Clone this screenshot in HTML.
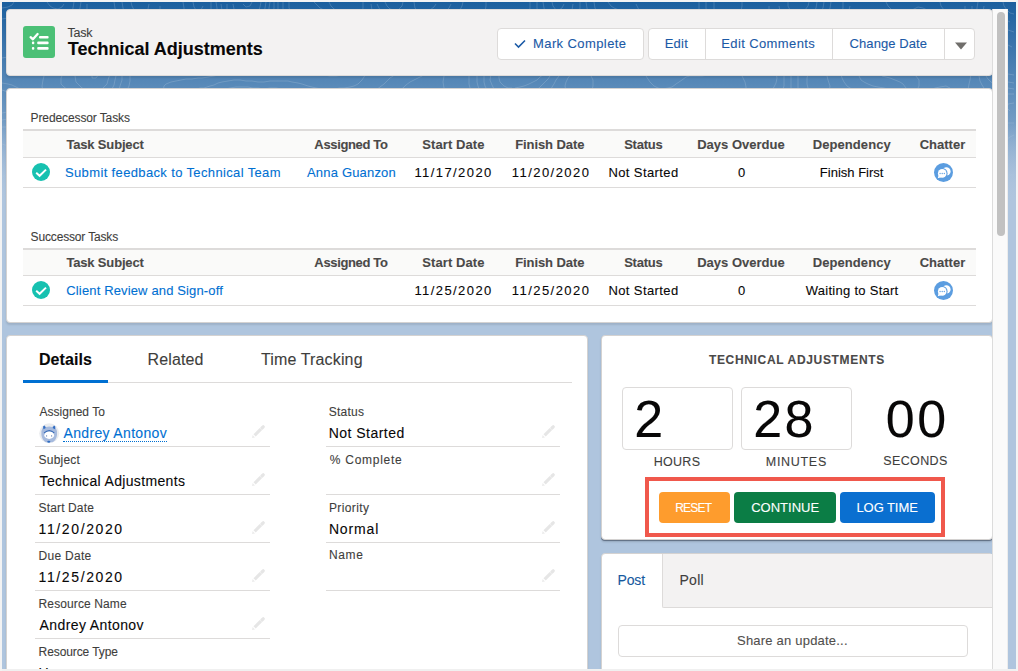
<!DOCTYPE html>
<html><head><meta charset="utf-8">
<style>
*{box-sizing:border-box;margin:0;padding:0}
html,body{width:1018px;height:671px;overflow:hidden;background:#f3f3f3;font-family:"Liberation Sans",sans-serif}
#bg{position:absolute;left:2px;top:2px;width:1014px;height:667px;overflow:hidden;background:linear-gradient(to bottom,rgba(175,197,222,0) 120px,#afc5de 200px),linear-gradient(to bottom,#1b5f9e 0,rgba(27,95,158,0) 200px),#afc5de}
.card{position:absolute;background:#fff;border-radius:4px;border:1px solid #d4d2d1;box-shadow:0 2px 2px rgba(0,0,0,.1);overflow:hidden}
.t{position:absolute;white-space:nowrap;line-height:1;-webkit-text-stroke:0.1px currentColor}
.line{position:absolute;height:1px;background:#dddbda}
</style></head><body>
<div id="bg"><div style="position:absolute;left:0;top:0;width:1014px;height:230px;-webkit-mask-image:linear-gradient(to bottom,#000 0,#000 90px,transparent 200px)"><svg style="position:absolute;left:0;top:0" width="1014" height="230" viewBox="0 0 1014 230"><path d="M1012 215 L1006 216 L1002 218 L999 220 L996 224 L995 228 M928 134 L932 132 L935 128 L934 122 L931 120 L928 120 L924 122 L921 126 L921 132 L924 134 L928 134 M1012 210 L1006 211 L1002 212 L998 214 L994 217 L992 220 L990 224 M925 150 L928 148 L932 145 L935 142 L938 139 L940 136 L942 132 L944 126 L944 123 L943 118 L940 115 L936 112 L932 112 L928 112 L923 114 L920 116 L916 119 L913 122 L911 126 L910 130 L910 135 L912 139 L914 143 L916 146 L920 150 L924 150 M1012 207 L1006 207 L1000 208 L996 209 L992 212 L989 214 L986 218 L985 222 L984 228 M327 0 L329 4 L332 7 L336 9 L340 11 L344 12 L350 13 L356 14 L360 11 L361 6 L361 0 M550 0 L551 4 L554 8 L557 8 L560 6 L562 2 M922 164 L926 162 L928 160 L932 156 L934 154 L937 150 L940 146 L942 144 L945 140 L947 136 L949 132 L950 126 L949 120 L948 116 L946 112 L942 109 L938 107 L934 106 L930 106 L924 108 L920 110 L917 112 L914 114 L910 118 L908 120 L905 124 L903 128 L901 132 L902 138 L904 142 L906 146 L908 150 L910 154 L912 158 L914 161 L918 164 L922 164 M1012 203 L1006 203 L1000 204 L996 205 L992 206 L988 208 L984 211 L982 214 L980 220 L979 224 M312 0 L316 4 L318 6 L322 8 L326 11 L330 13 L334 14 L338 16 L343 18 L348 20 L352 22 L356 24 L359 26 L362 28 L366 30 L370 32 L376 33 L380 32 L382 26 L379 22 L376 18 L374 15 L372 12 L370 8 L369 2 M541 0 L542 6 L543 10 L545 14 L548 17 L552 19 L558 20 L563 18 L566 16 L569 12 L570 8 L571 2 M525 72 L530 70 L533 68 L536 65 L538 62 L539 56 L536 52 L532 51 L527 52 L523 54 L520 56 L517 60 L515 64 L515 70 L518 72 L524 72 M94 76 L97 72 L94 69 L90 70 L90 76 L94 76 M920 172 L924 171 L928 168 L930 166 L934 162 L936 160 L939 156 L942 152 L944 150 L947 146 L950 142 L952 138 L954 134 L955 130 L955 124 L954 118 L953 114 L951 110 L948 107 L945 104 L942 102 L936 101 L930 101 L926 102 L922 104 L918 106 L914 109 L911 112 L908 114 L904 118 L902 121 L899 124 L896 128 L894 131 L893 136 L894 140 L896 144 L899 148 L902 152 L904 156 L906 160 L907 164 L910 168 L912 170 L917 172 M604 170 L606 168 L609 164 L612 160 L614 157 L617 154 L620 151 L622 148 L624 144 L625 138 L623 134 L620 131 L616 128 L612 127 L608 128 L604 132 L602 135 L599 138 L596 142 L594 144 L591 148 L588 152 L586 156 L587 162 L589 166 L592 169 L596 171 L602 171 M467 146 L469 142 L466 138 L463 136 L458 135 L454 137 L452 140 L454 144 L456 146 L462 147 L467 146 M1012 199 L1006 199 L1000 200 L996 200 L990 202 L986 203 L982 206 L979 208 L976 212 L975 216 L974 222 L974 226 M856 228 L854 224 L850 222 L846 221 L842 222 L839 226 M0 6 L6 5 L10 3 L12 0 M45 0 L48 4 L51 6 L56 7 L60 5 L62 2 M287 0 L287 6 L289 10 L292 13 L298 14 L304 13 L310 12 L316 13 L320 14 L325 16 L330 18 L334 20 L338 21 L342 23 L346 25 L350 27 L354 30 L357 32 L360 34 L364 37 L368 40 L372 42 L376 43 L381 44 L385 44 L390 43 L394 42 L398 39 L400 36 L402 30 L400 25 L396 22 L392 20 L389 18 L386 16 L382 13 L379 10 L377 6 L375 2 M412 0 L413 6 L416 10 L420 11 L424 10 L428 8 L432 5 L434 2 M535 0 L535 6 L536 12 L537 16 L538 21 L540 26 L542 30 L544 32 L548 32 L554 31 L558 29 L562 28 L567 26 L570 24 L574 21 L576 17 L577 12 L578 6 L578 0 M938 0 L939 4 L942 8 L944 11 L946 14 L948 18 L950 24 L951 28 L951 34 L951 40 L952 46 L954 49 L958 48 L960 44 L962 39 L963 34 L963 28 L963 22 L963 16 L963 10 L963 4 M513 86 L518 85 L522 84 L527 82 L531 80 L535 78 L538 75 L542 72 L544 69 L546 66 L548 62 L549 56 L549 50 L548 46 L546 41 L544 37 L540 36 L536 37 L531 38 L526 40 L522 42 L518 44 L515 46 L512 48 L508 52 L506 55 L504 58 L501 62 L499 66 L497 70 L497 76 L498 80 L502 84 L506 86 L510 86 M99 88 L102 85 L105 82 L106 78 L108 72 L107 66 L104 62 L102 59 L98 57 L92 56 L87 58 L83 60 L80 63 L77 66 L75 70 L73 74 L74 80 L76 82 L80 86 L84 88 L88 89 L94 90 L99 88 M266 110 L270 109 L273 106 L275 102 L272 99 L268 98 L262 97 L256 97 L252 96 L246 95 L240 95 L236 96 L235 102 L238 105 L242 107 L246 108 L252 109 L258 110 L262 110 M920 178 L925 176 L928 174 L932 171 L935 168 L938 164 L940 162 L944 158 L946 155 L949 152 L952 148 L954 145 L956 142 L958 138 L960 133 L961 128 L960 122 L959 118 L958 114 L956 109 L954 106 L951 102 L948 99 L944 96 L940 95 L934 95 L928 96 L924 98 L920 100 L917 102 L914 104 L910 108 L907 110 L904 113 L901 116 L898 119 L895 122 L892 125 L889 128 L886 131 L884 134 L883 140 L886 144 L888 146 L892 150 L894 152 L897 156 L900 160 L902 164 L904 168 L906 171 L908 174 L912 177 L916 178 L920 178 M617 188 L620 186 L623 182 L625 178 L626 172 L627 168 L629 164 L631 160 L633 156 L635 152 L636 148 L638 142 L638 138 L637 134 L635 130 L632 126 L630 124 L626 120 L623 118 L620 115 L616 113 L612 112 L606 112 L602 114 L599 116 L596 120 L594 123 L592 127 L590 131 L588 134 L585 138 L582 142 L580 144 L576 148 L574 150 L572 156 L574 162 L576 165 L578 168 L581 172 L584 176 L586 179 L589 182 L592 185 L596 187 L600 188 L606 189 L612 189 L617 188 M473 156 L477 154 L480 151 L481 146 L480 140 L478 137 L475 134 L472 132 L468 129 L464 128 L458 127 L452 127 L446 128 L443 130 L440 134 L439 138 L440 144 L441 148 L444 152 L446 154 L450 156 L456 158 L462 158 L468 157 L473 156 M537 172 L541 170 L544 167 L546 164 L550 160 L552 157 L554 154 L555 148 L554 144 L552 140 L550 136 L547 132 L544 129 L538 130 L536 132 L533 136 L532 140 L530 146 L530 150 L529 156 L529 162 L530 166 L532 170 L536 172 M818 200 L819 196 L818 190 L816 188 L812 188 L809 192 L810 198 L812 200 L818 200 M1012 195 L1006 195 L1000 196 L996 196 L990 197 L986 198 L981 200 L978 202 L974 205 L971 208 L969 212 L968 216 L968 222 L968 228 M763 228 L763 222 L763 216 L762 212 L760 207 L758 204 L754 200 L752 202 L754 208 L755 212 L757 216 L758 222 L759 226 M870 228 L868 224 L864 221 L860 218 L856 216 L852 214 L848 213 L842 212 L836 212 L832 214 L830 218 L829 224 M0 17 L6 16 L10 15 L14 13 L18 12 L24 11 L30 10 L36 12 L40 14 L44 16 L48 18 L52 20 L56 21 L61 20 L64 18 L67 14 L70 10 L71 6 L72 0 M129 0 L130 4 L132 8 L136 12 L140 13 L144 11 L146 7 L147 2 M191 0 L192 5 L194 8 L199 8 L201 4 M281 0 L281 6 L281 12 L282 16 L284 21 L287 24 L292 25 L297 24 L302 22 L306 21 L310 20 L316 19 L320 20 L326 22 L330 23 L334 25 L338 26 L342 28 L346 30 L350 33 L354 36 L356 38 L360 41 L363 44 L366 46 L370 49 L374 52 L378 54 L382 55 L388 56 L394 55 L399 54 L404 52 L408 50 L410 48 L413 44 L415 40 L417 36 L419 32 L421 28 L424 24 L426 22 L430 19 L434 16 L437 14 L440 12 L444 9 L447 6 L449 2 M401 0 L400 4 L396 8 L392 8 L388 7 L385 4 L383 0 M528 0 L528 6 L527 12 L526 18 L524 22 L522 25 L518 27 L514 28 L510 28 L504 27 L503 32 L502 36 L500 42 L499 46 L497 50 L496 54 L494 58 L492 62 L490 67 L489 72 L488 78 L490 83 L492 87 L495 90 L498 92 L502 94 L508 96 L512 96 L516 96 L522 94 L526 93 L530 91 L534 88 L537 86 L540 83 L543 80 L546 77 L548 74 L551 70 L554 66 L555 62 L557 58 L558 53 L559 48 L560 44 L562 40 L566 37 L570 35 L574 33 L578 31 L582 29 L585 26 L586 22 L586 16 L586 12 L585 6 L584 0 M841 0 L841 6 L840 10 L838 14 L836 19 L836 24 L840 24 L842 22 L844 17 L845 12 L847 8 L848 4 M884 0 L886 4 L890 8 L894 10 L898 11 L904 11 L908 9 L912 7 L916 5 L921 6 L925 8 L928 10 L932 12 L936 16 L938 18 L940 22 L942 28 L942 32 L942 38 L942 42 L941 48 L941 54 L942 60 L943 64 L945 68 L948 71 L952 72 L956 71 L959 68 L962 64 L964 60 L965 56 L966 51 L967 46 L968 42 L969 36 L970 30 L970 24 L970 20 L970 14 L970 8 L970 4 M621 46 L625 44 L625 38 L622 35 L618 33 L613 34 L610 38 L610 40 L613 44 L617 46 L621 46 M103 104 L104 100 L106 96 L108 92 L110 87 L112 83 L113 78 L114 74 L114 69 L113 64 L111 60 L108 56 L106 54 L102 51 L98 49 L92 49 L86 50 L82 51 L78 54 L75 56 L72 59 L69 62 L66 65 L64 68 L61 72 L59 76 L59 82 L62 85 L66 88 L70 90 L74 91 L78 93 L82 95 L86 98 L90 100 L93 102 L96 104 L102 105 M271 128 L275 126 L278 123 L281 120 L284 117 L287 114 L290 111 L293 108 L296 104 L297 100 L296 94 L294 92 L290 90 L286 88 L280 87 L274 86 L268 86 L262 87 L256 86 L251 86 L246 85 L240 85 L234 85 L228 86 L224 87 L220 90 L218 93 L218 98 L219 102 L222 105 L224 108 L228 112 L230 114 L234 117 L238 120 L242 121 L246 123 L250 124 L255 126 L260 128 L264 129 L270 128 M920 184 L925 182 L928 180 L932 177 L935 174 L938 171 L940 168 L944 164 L946 162 L950 158 L952 155 L955 152 L958 149 L960 146 L963 142 L965 138 L966 134 L967 128 L966 124 L965 118 L963 114 L962 110 L960 105 L958 100 L956 97 L954 93 L952 90 L948 86 L944 84 L938 85 L933 86 L929 88 L926 90 L922 92 L918 95 L915 98 L912 101 L908 104 L906 106 L902 110 L900 112 L896 116 L893 118 L890 121 L886 124 L883 126 L880 129 L876 132 L874 135 L872 140 L872 142 L875 146 L878 148 L882 150 L886 153 L890 156 L892 158 L895 162 L897 166 L900 170 L902 174 L904 177 L907 180 L910 182 L916 184 L920 184 M0 111 L5 110 L9 108 L12 105 L14 100 L12 94 L10 92 L6 90 L0 88 M621 196 L626 194 L629 192 L632 188 L634 184 L634 180 L635 174 L636 170 L638 164 L639 160 L641 156 L642 152 L644 148 L646 142 L647 138 L648 132 L646 128 L642 124 L640 122 L636 119 L633 116 L630 113 L626 110 L624 108 L620 105 L616 103 L612 102 L606 102 L602 103 L598 105 L594 108 L592 110 L588 114 L586 117 L584 120 L582 124 L579 128 L576 132 L573 134 L568 135 L564 132 L562 129 L560 126 L558 122 L555 118 L552 116 L548 114 L542 113 L537 114 L533 116 L530 119 L528 123 L526 128 L525 132 L523 136 L522 141 L521 146 L519 150 L518 156 L517 160 L518 166 L519 170 L520 174 L522 180 L524 184 L526 188 L528 192 L531 194 L536 194 L540 192 L542 190 L545 186 L547 182 L550 178 L552 175 L555 172 L558 170 L564 169 L568 171 L571 174 L574 177 L576 180 L579 184 L581 188 L584 191 L588 194 L592 195 L598 196 L602 196 L608 197 L614 197 L620 196 M340 138 L345 136 L348 133 L351 130 L352 126 L354 120 L353 114 L351 110 L348 106 L344 104 L340 104 L336 104 L332 106 L329 110 L327 114 L327 120 L328 126 L329 130 L330 134 L334 138 L338 138 M469 164 L474 163 L479 162 L484 160 L487 158 L490 154 L491 150 L490 145 L488 140 L486 136 L484 134 L480 130 L477 128 L473 126 L469 124 L464 123 L460 122 L454 121 L448 121 L442 122 L438 124 L436 126 L433 130 L432 134 L431 140 L431 146 L432 150 L434 154 L437 158 L440 161 L444 164 L448 165 L454 166 L460 165 L466 164 M165 178 L168 176 L170 172 L170 167 L168 164 L164 161 L158 160 L153 162 L150 164 L148 168 L148 173 L151 176 L154 178 L160 179 L165 178 M885 228 L883 224 L880 221 L876 219 L872 217 L868 215 L864 213 L860 211 L856 210 L851 208 L846 206 L842 204 L838 202 L836 200 L833 196 L832 190 L832 184 L832 178 L831 174 L829 170 L825 168 L820 167 L814 167 L810 168 L806 171 L803 174 L801 178 L799 182 L797 186 L795 190 L794 196 L796 202 L798 205 L802 208 L805 210 L809 212 L812 214 L816 217 L819 220 L820 224 M775 228 L776 222 L776 216 L775 210 L774 206 L772 202 L769 198 L766 194 L764 191 L761 188 L758 184 L756 182 L752 179 L746 178 L742 180 L738 184 L736 188 L737 194 L738 198 L740 202 L742 206 L744 210 L746 215 L747 220 L748 224 M1012 191 L1006 191 L1000 191 L994 192 L990 193 L984 194 L980 195 L976 197 L972 199 L968 202 L966 204 L962 208 L960 212 L959 216 L958 220 L958 225 M522 228 L521 222 L518 218 L514 217 L508 217 L504 219 L500 222 L498 224 L496 228 M411 228 L408 225 L404 224 L402 226 M0 56 L6 55 L10 54 L14 52 L17 48 L18 44 L18 40 L17 34 L16 30 L17 26 L20 22 L24 21 L30 21 L35 22 L39 24 L42 26 L46 29 L49 32 L53 34 L58 36 L62 36 L66 34 L68 32 L71 28 L72 24 L74 20 L76 14 L77 10 L78 6 L79 0 M120 0 L121 6 L122 10 L124 14 L127 18 L130 21 L134 23 L138 25 L144 26 L146 26 L152 25 L155 22 L157 18 L158 14 L158 8 L158 4 M181 0 L182 6 L182 10 L184 14 L187 18 L190 21 L194 23 L198 24 L202 24 L206 20 L208 16 L209 12 L209 6 L209 0 M276 0 L276 6 L276 12 L276 18 L276 24 L277 28 L279 32 L282 35 L286 37 L292 37 L296 35 L300 33 L304 30 L308 28 L312 26 L316 26 L320 26 L326 27 L330 28 L334 30 L339 32 L343 34 L346 36 L350 39 L353 42 L356 45 L359 48 L361 52 L364 56 L365 60 L365 66 L364 71 L362 75 L360 78 L356 82 L352 84 L348 85 L342 86 L338 86 L332 87 L326 87 L320 87 L314 86 L310 85 L306 84 L300 82 L296 81 L290 80 L286 79 L280 79 L274 79 L268 79 L262 80 L256 80 L250 79 L244 79 L238 78 L232 78 L226 79 L220 80 L216 81 L212 83 L208 84 L202 86 L198 86 L192 88 L188 89 L184 91 L182 94 L182 99 L184 102 L188 105 L192 106 L198 107 L204 107 L208 108 L212 110 L216 113 L219 116 L222 120 L224 122 L227 126 L230 129 L234 131 L238 133 L242 135 L246 136 L251 138 L255 140 L259 142 L262 144 L268 146 L274 145 L278 142 L280 140 L283 136 L286 132 L288 129 L291 126 L294 123 L298 120 L302 118 L306 118 L310 119 L313 122 L316 126 L317 130 L318 134 L320 140 L321 144 L324 147 L328 149 L334 149 L338 148 L342 146 L346 144 L350 141 L353 138 L356 135 L359 132 L361 128 L363 124 L364 118 L364 114 L365 108 L366 102 L367 98 L369 94 L372 90 L374 88 L378 85 L382 82 L384 80 L388 76 L391 74 L394 72 L398 69 L402 67 L406 65 L410 63 L414 61 L418 58 L420 56 L423 52 L426 48 L427 44 L429 40 L430 36 L432 32 L435 28 L438 25 L442 22 L445 20 L448 18 L452 14 L455 12 L458 8 L460 4 L461 0 M484 0 L484 4 L483 10 L482 16 L482 22 L484 28 L485 32 L486 36 L488 42 L488 46 L488 50 L486 56 L485 60 L484 64 L482 70 L482 74 L482 80 L483 84 L485 88 L487 92 L490 95 L493 98 L496 100 L500 103 L504 105 L508 107 L512 108 L516 112 L517 116 L518 122 L517 128 L516 132 L514 137 L512 141 L510 144 L506 146 L502 145 L499 142 L496 138 L494 135 L491 132 L488 129 L485 126 L482 124 L477 122 L472 120 L468 119 L464 118 L458 116 L454 115 L448 115 L442 115 L438 116 L434 118 L430 122 L428 125 L426 129 L424 133 L423 138 L422 142 L422 148 L423 152 L425 156 L427 160 L430 163 L432 166 L436 169 L440 172 L444 173 L450 174 L456 173 L460 172 L466 171 L470 170 L476 169 L482 168 L486 168 L492 167 L498 167 L503 168 L506 170 L509 174 L511 178 L513 182 L514 186 L516 192 L516 198 L514 203 L511 206 L508 208 L504 211 L500 214 L497 216 L494 219 L491 222 L488 226 M712 0 L712 6 L712 10 L713 16 L713 22 L712 28 L710 31 L708 34 L704 38 L702 40 L698 44 L696 46 L692 50 L690 53 L687 56 L684 58 L678 60 L672 59 L666 58 L662 58 L656 56 L652 55 L648 52 L645 50 L643 46 L641 42 L638 38 L636 34 L634 31 L631 28 L628 25 L624 22 L620 21 L616 20 L610 19 L606 18 L600 16 L598 14 L595 10 L593 6 L592 0 M534 228 L534 222 L535 218 L537 214 L540 210 L543 208 L546 205 L549 202 L551 198 L554 194 L556 190 L558 187 L562 185 L566 186 L569 190 L572 194 L574 197 L577 200 L582 202 L586 202 L591 202 L596 202 L602 202 L608 202 L612 202 L618 202 L624 202 L628 201 L632 199 L636 196 L638 193 L640 189 L641 184 L642 180 L643 174 L643 168 L644 164 L646 158 L648 154 L650 150 L652 146 L654 143 L656 140 L660 136 L664 134 L667 132 L670 130 L673 126 L672 122 L668 119 L662 118 L658 118 L652 117 L648 116 L644 114 L640 112 L636 109 L633 106 L630 103 L626 100 L624 98 L620 94 L617 92 L614 90 L608 89 L604 90 L600 93 L597 96 L594 98 L590 101 L586 103 L582 106 L578 107 L574 108 L570 108 L565 106 L560 104 L556 102 L553 100 L550 98 L547 94 L548 90 L550 85 L552 82 L554 78 L557 74 L559 70 L562 66 L564 62 L566 58 L568 54 L570 51 L573 48 L577 46 L582 45 L586 46 L590 49 L593 52 L596 56 L598 59 L600 62 L604 66 L608 68 L610 68 L616 66 L620 64 L624 63 L630 63 L636 64 L638 66 L642 70 L644 74 L646 77 L648 80 L652 84 L656 86 L660 87 L666 86 L670 85 L674 82 L677 80 L680 78 L684 75 L688 74 L694 74 L700 74 L706 73 L710 72 L715 70 L718 68 L722 65 L726 62 L728 59 L728 56 L726 50 L725 46 L723 42 L723 36 L724 30 L726 27 L729 24 L732 21 L734 18 L737 14 L739 10 L740 4 L740 0 M829 0 L828 6 L827 10 L825 14 L823 18 L822 22 L820 28 L822 34 L824 36 L828 38 L834 40 L838 40 L842 39 L846 37 L850 34 L852 31 L854 27 L856 23 L858 19 L860 16 L864 12 L868 10 L874 11 L878 13 L882 15 L886 18 L889 20 L892 22 L896 26 L898 29 L900 34 L901 38 L900 44 L900 48 L899 54 L899 60 L901 64 L904 68 L907 70 L911 72 L914 74 L917 78 L917 84 L915 88 L913 92 L910 96 L908 98 L905 102 L902 105 L899 108 L896 111 L892 114 L890 116 L886 119 L882 121 L878 124 L875 126 L872 128 L868 131 L864 134 L861 136 L858 139 L855 142 L853 146 L852 150 L856 152 L860 152 L866 153 L871 154 L876 155 L880 157 L884 159 L888 162 L890 164 L893 168 L895 172 L898 176 L900 179 L902 182 L906 186 L908 188 L912 190 L918 191 L924 190 L928 188 L930 186 L934 182 L936 180 L939 176 L942 173 L945 170 L948 166 L950 164 L954 161 L957 158 L960 155 L964 152 L966 150 L970 146 L972 144 L974 140 L975 134 L975 128 L973 124 L972 120 L970 114 L969 110 L968 106 L967 100 L966 94 L966 88 L967 82 L968 78 L969 72 L969 66 L970 60 L970 56 L971 50 L972 45 L973 40 L974 34 L974 30 L975 24 L975 18 L975 12 L975 6 L976 0 M930 41 L924 41 L922 38 L919 34 L919 28 L922 24 L926 24 L930 26 L932 29 L933 34 L932 38 M100 134 L106 132 L109 130 L112 127 L114 123 L116 118 L116 114 L116 109 L115 104 L115 98 L116 92 L117 88 L118 84 L120 78 L120 74 L120 68 L119 64 L117 60 L115 56 L112 52 L110 49 L106 46 L103 44 L99 42 L94 41 L88 41 L82 41 L77 42 L72 44 L68 46 L66 48 L62 52 L60 54 L56 58 L54 60 L50 63 L47 66 L44 70 L42 74 L41 78 L40 84 L41 90 L44 94 L48 95 L54 95 L60 95 L64 96 L70 97 L74 99 L78 101 L81 104 L84 107 L86 110 L88 115 L89 120 L91 124 L92 128 L95 132 L100 134 M761 130 L763 126 L763 120 L763 114 L762 109 L762 104 L762 100 L764 95 L767 92 L770 88 L772 85 L774 81 L775 76 L774 71 L772 67 L769 64 L766 61 L762 59 L758 57 L752 56 L746 56 L740 58 L736 60 L735 64 L737 68 L739 72 L741 76 L743 80 L744 85 L744 89 L742 94 L740 96 L737 100 L734 104 L733 108 L733 114 L735 118 L737 122 L740 125 L744 128 L748 130 L752 131 L758 131 M0 118 L6 117 L10 116 L15 114 L18 112 L22 109 L25 106 L27 102 L27 96 L24 92 L22 90 L18 87 L14 85 L10 83 L6 82 L0 81 M1012 101 L1006 102 L1005 106 L1008 109 M900 228 L899 224 L896 221 L892 218 L889 216 L884 214 L880 213 L876 211 L872 210 L867 208 L862 206 L858 205 L854 203 L850 201 L846 198 L844 196 L842 192 L842 186 L842 182 L844 176 L845 172 L846 166 L846 162 L846 156 L842 154 L838 154 L832 153 L828 152 L824 150 L820 147 L818 144 L815 140 L812 136 L810 134 L806 131 L802 130 L796 129 L790 130 L786 130 L780 132 L776 134 L773 136 L771 140 L771 146 L772 151 L774 155 L776 158 L779 162 L782 165 L784 168 L786 173 L786 178 L785 182 L782 186 L778 187 L774 186 L770 182 L768 179 L766 176 L763 172 L760 170 L756 168 L750 167 L746 168 L740 170 L737 172 L734 174 L730 178 L728 182 L727 186 L728 192 L730 196 L732 200 L734 203 L736 207 L738 211 L740 215 L742 220 L742 224 M167 184 L171 182 L174 179 L176 176 L177 170 L177 164 L174 160 L172 157 L168 155 L164 153 L158 153 L153 154 L148 156 L144 158 L141 160 L138 163 L135 166 L132 170 L132 174 L134 176 L138 179 L142 182 L146 183 L150 184 L156 185 L162 185 L167 184 M116 178 L118 176 L120 172 L118 168 L116 166 L112 163 L108 161 L103 162 L101 166 L102 171 L104 176 L106 178 L112 179 M266 190 L270 187 L272 184 L274 178 L272 172 L270 169 L266 167 L261 168 L257 170 L254 173 L251 176 L250 180 L250 184 L252 188 L256 191 L262 191 L266 190 M1012 186 L1006 186 L1000 187 L994 187 L988 188 L984 188 L978 190 L974 192 L970 194 L966 196 L963 198 L960 200 L956 203 L952 205 L948 208 L944 210 L940 212 L938 214 L935 218 L934 222 L933 228 M450 228 L448 223 L445 220 L442 218 L438 216 L432 215 L426 215 L420 214 L416 213 L412 211 L408 208 L405 206 L401 204 L396 203 L392 204 L389 208 L388 212 L388 218 L388 222 L389 228 M784 228 L785 222 L787 218 L790 216 L796 216 L800 217 L804 219 L808 222 L810 224 M16 228 L12 225 L6 225 L0 225 M106 228 L106 224 L104 218 L103 214 L101 210 L101 204 L104 201 L108 199 L112 196 L116 195 L120 193 L124 192 L130 191 L136 191 L142 191 L148 192 L154 192 L160 192 L166 190 L170 189 L174 186 L176 184 L180 180 L181 176 L183 172 L183 166 L182 160 L180 156 L178 153 L174 150 L170 148 L166 147 L160 147 L154 147 L150 148 L144 150 L140 152 L136 153 L130 153 L125 152 L122 150 L119 146 L118 142 L118 138 L120 132 L122 128 L123 124 L124 118 L124 114 L124 108 L124 104 L124 98 L124 94 L125 88 L127 84 L128 79 L128 74 L128 70 L126 64 L124 60 L122 56 L120 52 L118 49 L116 45 L114 42 L110 38 L107 36 L103 34 L98 33 L94 32 L89 30 L86 27 L84 23 L84 18 L84 14 L85 8 L85 2 M112 0 L113 6 L114 12 L115 16 L117 20 L119 24 L122 27 L126 29 L130 31 L134 32 L139 34 L144 35 L148 36 L154 37 L158 36 L162 34 L166 32 L170 29 L174 27 L180 28 L184 30 L188 31 L192 32 L198 34 L202 34 L206 33 L210 32 L213 28 L215 24 L215 18 L215 12 L215 6 L214 0 M272 0 L272 6 L271 12 L270 18 L270 22 L269 28 L269 34 L271 38 L274 42 L276 44 L280 46 L284 48 L290 49 L295 48 L300 46 L302 44 L306 41 L309 38 L312 36 L316 34 L322 33 L327 34 L332 35 L336 37 L340 39 L344 42 L346 44 L350 48 L352 51 L354 56 L353 62 L351 66 L348 69 L344 72 L340 73 L334 74 L328 74 L322 73 L316 73 L310 72 L304 72 L300 72 L294 71 L288 71 L282 71 L276 71 L272 72 L266 73 L260 73 L254 73 L248 73 L243 72 L238 71 L232 71 L226 71 L222 72 L216 73 L212 74 L206 75 L200 76 L196 76 L190 77 L184 77 L179 78 L174 79 L169 80 L164 82 L162 84 L161 90 L162 94 L165 98 L168 102 L170 105 L173 108 L176 111 L179 114 L182 116 L186 119 L190 121 L194 123 L198 124 L202 126 L206 130 L208 133 L210 136 L214 139 L218 142 L222 144 L226 145 L230 146 L236 148 L240 150 L244 152 L246 156 L245 162 L243 166 L241 170 L240 176 L240 182 L241 188 L243 192 L246 196 L248 198 L252 200 L258 201 L264 201 L270 201 L274 200 L280 198 L284 197 L288 195 L292 192 L293 188 L294 182 L294 178 L296 174 L300 171 L304 170 L310 168 L314 166 L318 164 L322 162 L326 160 L330 158 L334 156 L338 154 L342 152 L346 150 L349 148 L352 146 L356 143 L360 140 L362 138 L366 135 L369 132 L371 128 L373 124 L374 120 L376 114 L378 110 L380 106 L382 103 L385 100 L388 97 L392 94 L394 92 L398 88 L401 86 L404 83 L408 80 L412 78 L416 76 L420 74 L423 72 L426 69 L428 66 L431 62 L434 58 L436 55 L438 52 L441 48 L443 44 L445 40 L448 36 L450 33 L453 30 L456 28 L460 26 L466 26 L469 28 L471 32 L474 36 L476 40 L477 44 L478 48 L478 54 L478 58 L477 64 L476 68 L475 74 L475 80 L476 84 L478 89 L480 93 L482 96 L485 100 L488 104 L490 107 L492 110 L494 114 L492 118 L486 117 L482 116 L476 115 L472 114 L466 113 L462 112 L456 110 L452 109 L447 108 L442 107 L436 108 L432 110 L430 112 L426 116 L424 119 L422 122 L419 126 L417 130 L414 134 L412 137 L410 140 L408 144 L407 150 L408 155 L410 158 L413 162 L416 164 L420 167 L424 170 L426 172 L430 175 L434 178 L438 180 L442 181 L448 181 L454 180 L458 179 L462 177 L467 176 L472 175 L478 175 L484 175 L490 175 L494 176 L498 178 L502 181 L504 184 L506 189 L507 194 L506 198 L504 202 L501 206 L498 208 L494 212 L491 214 L488 217 L485 220 L482 223 L480 228 M704 0 L704 6 L705 12 L704 18 L704 22 L702 26 L700 30 L698 34 L694 38 L692 41 L689 44 L686 47 L682 50 L678 51 L674 52 L669 52 L664 51 L660 50 L656 48 L652 44 L650 42 L647 38 L644 34 L642 31 L640 28 L637 24 L634 20 L632 18 L628 15 L625 12 L621 10 L617 8 L612 6 L609 4 L606 0 M822 0 L821 6 L819 10 L817 14 L815 18 L813 22 L811 26 L811 32 L813 36 L816 40 L818 42 L822 44 L827 46 L832 47 L838 48 L844 47 L848 46 L852 44 L856 41 L858 38 L861 34 L863 30 L866 26 L869 24 L874 23 L878 24 L882 26 L886 30 L888 32 L890 37 L891 42 L890 48 L889 52 L887 56 L884 60 L882 63 L879 66 L877 70 L880 74 L884 75 L888 76 L893 78 L898 80 L901 82 L904 86 L904 90 L903 94 L901 98 L898 102 L896 105 L893 108 L890 111 L886 114 L883 116 L880 118 L876 120 L872 122 L868 124 L864 126 L860 128 L856 130 L851 132 L846 134 L842 135 L836 136 L830 134 L826 132 L824 130 L820 127 L817 124 L814 122 L810 120 L804 118 L800 118 L794 117 L788 116 L784 115 L780 112 L778 109 L777 104 L778 98 L779 94 L780 90 L782 84 L782 80 L782 74 L782 70 L780 66 L777 62 L774 58 L771 56 L768 53 L764 51 L760 49 L756 47 L752 45 L748 44 L744 42 L741 38 L742 33 L744 30 L748 27 L752 25 L756 24 L760 22 L764 19 L766 16 L767 10 L767 4 M1012 92 L1006 92 L1000 92 L996 92 L990 91 L986 90 L982 86 L980 83 L978 79 L977 74 L976 70 L975 64 L975 58 L975 52 L976 46 L977 42 L978 36 L978 32 L979 26 L980 20 L980 16 L981 10 L982 4 M1001 0 L1002 4 L1005 8 L1008 11 L1012 12 M582 94 L576 95 L571 94 L567 92 L564 89 L563 84 L564 80 L566 76 L569 72 L572 69 L576 66 L580 66 L584 68 L586 70 L589 74 L591 78 L591 84 L590 88 L586 92 L582 94 M575 228 L576 223 L578 218 L580 215 L583 212 L586 210 L592 208 L596 207 L602 206 L608 206 L614 207 L620 208 L626 208 L632 207 L636 206 L640 203 L643 200 L646 196 L647 192 L649 188 L649 182 L649 176 L650 170 L650 166 L652 160 L653 156 L655 152 L658 148 L661 146 L664 144 L668 142 L674 140 L678 139 L682 137 L686 134 L688 130 L689 126 L689 120 L688 116 L685 112 L682 109 L678 106 L676 104 L674 100 L676 96 L678 93 L682 90 L686 88 L690 87 L696 87 L702 88 L706 89 L712 90 L716 91 L718 96 L718 100 L719 106 L721 110 L723 114 L725 118 L727 122 L730 126 L732 129 L735 132 L738 136 L740 138 L743 142 L745 146 L745 152 L743 156 L740 159 L736 162 L733 164 L730 166 L726 169 L722 172 L718 174 L714 176 L710 177 L704 178 L700 179 L697 182 L697 188 L700 191 L704 193 L710 194 L714 195 L718 196 L722 199 L725 202 L728 205 L730 208 L733 212 L735 216 L736 220 L737 226 M0 125 L6 125 L10 124 L16 122 L20 121 L24 119 L28 118 L32 116 L37 114 L41 112 L45 110 L49 108 L53 106 L58 104 L64 104 L70 105 L74 108 L76 110 L78 114 L80 120 L80 126 L79 132 L78 138 L79 144 L80 148 L82 153 L84 157 L86 160 L88 165 L90 170 L91 174 L92 178 L94 184 L94 188 L95 194 L96 198 L96 203 L94 206 L90 210 L88 212 L85 216 L84 220 L82 226 M1012 181 L1006 181 L1000 181 L994 181 L988 181 L982 182 L978 183 L974 185 L970 187 L966 189 L962 191 L958 193 L954 195 L950 196 L944 196 L940 194 L939 190 L940 186 L942 182 L945 178 L948 174 L950 172 L954 168 L957 166 L960 164 L964 161 L968 159 L972 157 L976 155 L980 152 L982 150 L986 146 L988 142 L989 138 L989 132 L988 126 L988 122 L990 119 L996 119 L1000 120 L1006 121 L1012 121 M0 174 L6 174 L12 174 L16 173 L20 171 L23 168 L23 162 L22 158 L19 154 L16 150 L13 148 L10 146 L6 144 L0 142 M908 208 L902 209 L896 208 L892 208 L886 207 L882 206 L876 205 L872 203 L868 202 L863 200 L859 198 L856 196 L852 192 L851 188 L851 182 L853 178 L855 174 L857 170 L860 167 L864 164 L868 163 L874 162 L880 164 L884 166 L886 168 L889 172 L892 176 L894 180 L896 183 L898 186 L900 190 L903 194 L906 197 L908 200 L910 204 L909 208 M458 228 L457 224 L455 220 L452 217 L449 214 L446 211 L442 209 L438 208 L432 207 L426 207 L422 206 L417 204 L413 202 L410 200 L406 196 L403 194 L399 192 L394 191 L390 192 L386 195 L383 198 L381 202 L379 206 L378 210 L378 215 L379 220 L380 226 M314 228 L314 222 L315 216 L314 210 L313 206 L310 202 L308 200 L304 197 L298 198 L297 202 L297 208 L298 212 L299 218 L300 224 L300 228 M33 228 L32 222 L30 218 L28 215 L24 213 L20 212 L14 212 L10 212 L4 213 M268 0 L267 6 L267 12 L265 16 L264 21 L262 25 L260 30 L258 34 L256 38 L257 44 L260 48 L262 50 L265 54 L267 58 L264 62 L260 63 L254 64 L248 63 L243 62 L238 61 L232 60 L226 60 L220 62 L216 63 L211 64 L206 65 L200 65 L194 65 L188 65 L182 64 L178 62 L174 60 L172 58 L171 52 L173 48 L176 45 L180 43 L186 43 L192 43 L196 44 L202 45 L208 46 L214 46 L219 44 L222 42 L225 38 L225 32 L224 28 L223 22 L222 18 L221 12 L220 8 L219 2 M697 0 L697 6 L697 12 L697 18 L696 23 L694 28 L692 31 L690 34 L687 38 L684 41 L680 44 L676 45 L670 46 L664 45 L660 43 L657 40 L654 37 L652 34 L649 30 L647 26 L645 22 L643 18 L640 14 L638 10 L636 6 L634 2 M815 0 L814 6 L812 10 L810 13 L808 16 L805 20 L802 24 L801 28 L802 34 L804 38 L806 41 L809 44 L812 46 L816 49 L820 51 L824 52 L830 54 L834 55 L840 56 L844 56 L850 57 L854 58 L857 62 L857 68 L857 74 L859 78 L862 80 L866 82 L871 84 L876 85 L882 86 L886 87 L890 88 L894 92 L894 96 L893 100 L890 104 L888 106 L884 110 L881 112 L878 114 L874 116 L870 118 L865 120 L860 122 L856 123 L852 125 L846 126 L840 126 L834 125 L830 123 L826 120 L824 118 L820 115 L816 113 L812 111 L808 110 L802 109 L798 107 L794 105 L790 102 L789 98 L788 92 L789 86 L789 80 L789 74 L788 68 L787 64 L785 60 L782 56 L780 54 L776 50 L774 48 L771 44 L769 40 L770 34 L772 31 L775 28 L777 24 L778 20 L779 14 L778 9 L777 4 M1012 87 L1006 86 L1002 86 L996 84 L992 82 L989 80 L986 77 L984 74 L982 70 L980 64 L980 60 L980 54 L980 48 L980 44 L981 38 L982 34 L984 28 L985 24 L986 20 L988 16 L992 12 L997 14 L1000 16 L1004 18 L1008 20 M144 59 L138 59 L134 56 L132 53 L131 48 L134 45 L138 46 L142 48 L146 52 L147 56 L144 59 M338 58 L332 59 L326 58 L323 56 L321 52 L322 48 L326 46 L332 46 L336 48 L338 50 L340 54 L338 58 M470 104 L464 105 L460 104 L455 102 L451 100 L448 97 L445 94 L443 90 L442 86 L441 80 L442 74 L443 70 L445 66 L448 63 L451 60 L454 58 L458 56 L463 56 L466 60 L466 64 L467 70 L467 76 L467 82 L468 86 L470 91 L472 96 L473 100 L471 104 M404 126 L398 126 L394 124 L392 120 L392 116 L393 112 L396 108 L398 106 L402 102 L405 100 L409 98 L414 97 L418 98 L420 102 L420 106 L418 112 L416 116 L414 119 L411 122 L408 124 L404 126 M144 142 L138 142 L134 141 L131 138 L130 134 L130 130 L131 124 L132 118 L133 114 L134 109 L136 104 L138 101 L142 100 L146 101 L150 103 L154 105 L158 108 L160 110 L164 113 L167 116 L170 120 L172 122 L175 126 L177 130 L178 134 L176 137 L171 138 L166 138 L160 139 L154 140 L150 141 L144 142 M0 183 L6 183 L10 184 L16 185 L22 184 L25 182 L28 179 L30 176 L32 172 L33 166 L32 160 L31 156 L28 152 L26 149 L24 146 L21 142 L20 138 L20 134 L23 130 L27 128 L32 126 L36 125 L40 123 L44 122 L49 120 L53 118 L58 116 L62 116 L66 117 L68 122 L68 126 L67 130 L67 136 L67 142 L68 146 L70 151 L72 154 L75 158 L78 162 L80 166 L82 169 L84 174 L85 178 L86 184 L86 190 L84 196 L83 200 L81 204 L79 208 L77 212 L76 216 L74 222 L74 226 M722 154 L716 154 L713 152 L710 150 L707 146 L705 142 L704 138 L704 132 L705 128 L708 124 L712 124 L716 126 L719 128 L722 131 L724 134 L726 138 L728 142 L729 148 L726 152 L723 154 M1012 173 L1006 173 L1001 172 L996 170 L993 168 L993 162 L994 158 L996 154 L998 150 L1000 146 L1002 142 L1004 138 L1008 135 L1012 133 M327 228 L327 222 L328 218 L329 212 L328 208 L326 204 L324 200 L322 196 L320 191 L319 186 L320 180 L321 176 L324 172 L326 170 L330 166 L332 164 L336 162 L340 159 L344 157 L348 154 L352 152 L355 150 L358 148 L362 145 L366 143 L370 142 L376 140 L382 142 L385 144 L388 148 L390 152 L391 156 L392 160 L393 166 L392 172 L391 176 L388 180 L386 182 L383 186 L380 190 L378 192 L375 196 L372 199 L370 202 L366 205 L362 207 L358 209 L354 210 L350 213 L347 216 L347 222 L348 226 M174 228 L173 224 L170 220 L168 218 L164 215 L160 213 L156 211 L152 208 L152 205 L156 202 L160 200 L164 199 L168 197 L172 194 L175 192 L178 190 L181 186 L184 182 L186 178 L187 174 L188 170 L190 164 L190 160 L192 154 L194 152 L200 151 L206 152 L210 152 L215 154 L220 156 L224 158 L226 160 L230 164 L231 168 L232 173 L233 178 L234 184 L235 188 L237 192 L238 196 L241 200 L244 203 L248 206 L252 208 L256 208 L262 209 L268 210 L272 210 L278 211 L282 213 L285 216 L287 220 L288 224 M583 228 L584 224 L586 220 L589 216 L592 214 L597 212 L602 211 L608 211 L614 212 L618 213 L624 214 L628 215 L634 216 L640 216 L646 214 L649 212 L652 209 L654 206 L657 202 L658 198 L660 193 L661 188 L660 183 L659 178 L658 174 L657 168 L658 163 L660 158 L662 155 L666 152 L670 151 L676 150 L682 152 L684 154 L686 160 L686 162 L684 168 L682 172 L680 176 L678 180 L677 184 L677 190 L679 194 L682 197 L686 200 L689 202 L694 204 L698 205 L704 206 L710 206 L714 206 L719 208 L723 210 L726 213 L728 216 L730 220 L731 226 M886 197 L880 197 L874 196 L870 195 L866 193 L863 190 L862 186 L862 182 L864 178 L867 174 L871 172 L876 172 L880 173 L884 176 L886 179 L888 183 L890 188 L890 192 L888 196 M430 194 L424 196 L419 194 L416 192 L413 188 L412 184 L414 181 L420 181 L424 183 L428 186 L430 189 L431 194 M474 220 L468 221 L464 219 L460 216 L458 214 L454 210 L452 207 L449 204 L447 200 L446 196 L448 192 L451 190 L454 188 L458 185 L462 183 L466 182 L472 181 L478 180 L484 181 L488 182 L492 184 L496 188 L498 192 L497 198 L496 202 L492 206 L490 208 L486 212 L484 214 L480 217 L476 219 M43 228 L42 223 L41 218 L39 214 L36 210 L34 207 L31 204 L28 202 L24 200 L18 200 L14 201 L10 202 L5 204 L0 205 M126 217 L122 216 L122 211 L126 208 L128 208 L131 212 L128 216 M264 0 L263 6 L262 11 L260 16 L258 19 L256 22 L252 25 L248 27 L242 28 L237 26 L234 24 L230 20 L228 16 L227 12 L225 8 L225 2 M807 0 L806 4 L803 8 L800 11 L796 13 L792 12 L788 8 L786 4 L786 0 M674 38 L668 38 L664 36 L661 34 L658 30 L657 26 L657 20 L660 16 L664 14 L668 13 L672 12 L677 10 L682 9 L686 11 L688 16 L688 22 L686 27 L684 31 L681 34 L678 37 L674 38 M1012 81 L1006 80 L1002 79 L998 78 L994 75 L991 72 L988 68 L986 64 L985 60 L985 54 L985 48 L986 42 L987 38 L988 34 L990 30 L994 26 L998 26 L1002 27 L1006 28 L1012 30 M850 118 L844 118 L840 117 L836 116 L832 113 L828 110 L825 108 L821 106 L817 104 L812 102 L808 101 L804 99 L800 97 L798 94 L796 88 L796 84 L796 78 L796 74 L796 69 L796 64 L795 58 L796 53 L800 52 L804 53 L808 54 L813 56 L818 58 L822 59 L826 61 L830 63 L834 65 L837 68 L839 72 L840 76 L842 80 L845 84 L848 86 L852 88 L858 90 L862 91 L868 92 L872 93 L876 94 L880 96 L882 100 L881 104 L878 107 L874 110 L870 112 L866 114 L862 115 L858 116 L852 118 M54 228 L53 222 L51 218 L49 214 L47 210 L44 206 L42 203 L40 200 L37 196 L36 192 L36 186 L37 182 L38 178 L40 174 L42 168 L43 164 L42 158 L41 154 L39 150 L37 146 L35 142 L37 138 L40 136 L46 135 L50 136 L53 140 L55 144 L57 148 L59 152 L62 156 L64 158 L68 162 L70 164 L73 168 L76 172 L77 176 L78 180 L79 186 L78 190 L76 196 L74 200 L72 204 L70 207 L68 211 L66 216 L64 220 L64 224 M352 200 L346 201 L340 201 L336 199 L333 196 L330 193 L328 188 L328 184 L328 180 L330 176 L332 172 L336 168 L339 166 L342 164 L346 161 L350 159 L354 156 L358 154 L362 152 L366 151 L370 150 L374 151 L378 153 L380 156 L382 160 L383 166 L382 171 L380 176 L378 180 L376 184 L374 186 L371 190 L368 193 L364 196 L360 198 L356 199 L352 200 M183 228 L182 222 L180 218 L178 214 L176 210 L175 206 L176 202 L178 198 L181 194 L184 190 L186 187 L188 184 L190 180 L192 176 L194 172 L196 168 L200 164 L204 162 L208 162 L212 163 L216 164 L220 167 L222 170 L225 174 L226 178 L228 183 L230 188 L231 192 L233 196 L234 200 L236 204 L239 208 L242 211 L246 213 L250 215 L255 216 L260 217 L264 218 L269 220 L273 222 L276 226 M474 212 L468 212 L464 210 L462 208 L459 204 L458 200 L458 196 L461 192 L464 190 L468 188 L474 186 L480 187 L484 188 L488 192 L489 196 L488 201 L486 204 L482 208 L479 210 L475 212 M590 228 L592 223 L594 220 L598 218 L604 216 L608 216 L612 217 L617 218 L621 220 L624 222 L627 226 M688 228 L690 223 L694 220 L698 219 L704 218 L710 218 L716 219 L720 222 L722 226 M259 0 L258 5 L256 10 L254 13 L251 16 L246 18 L240 17 L236 14 L234 11 L232 7 L231 2 M1012 73 L1006 72 L1002 70 L999 68 L996 65 L994 61 L993 56 L992 50 L994 44 L996 42 L1002 41 L1006 43 L1010 45 M824 93 L818 93 L813 92 L809 90 L806 86 L805 82 L805 76 L806 72 L810 68 L814 67 L818 68 L822 71 L825 74 L826 78 L828 84 L827 90 L824 93 M854 104 L848 105 L850 103 L854 104 M354 192 L348 193 L342 192 L339 190 L336 186 L336 182 L337 178 L339 174 L342 171 L345 168 L348 166 L352 164 L356 161 L360 160 L366 159 L370 160 L373 164 L374 170 L372 176 L370 180 L368 183 L366 186 L362 189 L358 191 L354 192 M62 198 L56 200 L52 198 L48 194 L46 190 L46 184 L48 178 L50 175 L52 172 L56 169 L62 170 L65 172 L68 175 L70 180 L70 184 L70 188 L68 192 L65 196 L62 198 M190 228 L189 222 L188 218 L186 213 L185 208 L185 202 L186 198 L188 194 L190 190 L193 186 L195 182 L198 178 L200 175 L204 172 L208 171 L212 172 L216 174 L219 178 L222 182 L224 186 L225 190 L227 194 L228 198 L230 204 L232 208 L233 212 L235 216 L238 219 L241 222 L244 225 L247 228 M599 228 L602 224 L606 223 L611 224 L614 227 M250 0 L248 4 L244 5 L241 2 M354 183 L349 182 L348 178 L350 175 L354 172 L358 171 L361 174 L360 178 L356 182 M197 228 L196 223 L195 218 L193 214 L192 209 L192 204 L192 200 L194 195 L196 191 L198 188 L202 184 L205 182 L210 181 L214 184 L216 186 L219 190 L221 194 L223 198 L224 203 L225 208 L226 214 L226 220 L225 226" fill="none" stroke="#fff" stroke-opacity=".16" stroke-width="1"/></svg></div></div>

<!-- header card -->
<div class="card" style="left:6px;top:9px;width:987px;height:67px;background:#f3f2f2;border:1px solid #dddbda"></div>
<div style="position:absolute;left:23px;top:26px;width:32px;height:32px;background:#4bc076;border-radius:3px">
 <svg width="32" height="32" viewBox="0 0 32 32">
  <path d="M7.6 11.2 L9.9 13.3 L14.6 8" stroke="#fff" stroke-width="2.3" fill="none" stroke-linecap="round" stroke-linejoin="round"/>
  <rect x="16" y="9.9" width="9.6" height="2.5" rx="1" fill="#fff"/>
  <rect x="8.9" y="15.6" width="2.4" height="2.6" rx="1" fill="#fff"/>
  <rect x="14.2" y="15.5" width="11.4" height="2.7" rx="1" fill="#fff"/>
  <rect x="8.9" y="21.1" width="2.4" height="2.6" rx="1" fill="#fff"/>
  <rect x="14.2" y="21" width="11.4" height="2.7" rx="1" fill="#fff"/>
 </svg>
</div>

<!-- buttons -->
<div style="position:absolute;left:497px;top:28px;width:147px;height:32px;background:#fff;border:1px solid #dddbda;border-radius:4px"></div>
<svg style="position:absolute;left:513px;top:38px" width="14" height="12" viewBox="0 0 14 12"><path d="M2 5.5 L5.5 9 L12 2.5" stroke="#1b5aa6" stroke-width="1.6" fill="none"/></svg>
<div style="position:absolute;left:648px;top:28px;width:327px;height:32px;background:#fff;border:1px solid #dddbda;border-radius:4px"></div>
<div style="position:absolute;left:705px;top:29px;width:1px;height:30px;background:#dddbda"></div>
<div style="position:absolute;left:832px;top:29px;width:1px;height:30px;background:#dddbda"></div>
<div style="position:absolute;left:944px;top:29px;width:1px;height:30px;background:#dddbda"></div>
<svg style="position:absolute;left:954px;top:41px" width="14" height="10" viewBox="0 0 14 10"><path d="M1 1.5 L13 1.5 L7 8.5 Z" fill="#706e6b"/></svg>

<!-- related tasks card -->
<div class="card" style="left:6px;top:88px;width:987px;height:235px"></div>

<!-- table -->
<div style="position:absolute;left:23px;top:129px;width:953px;height:2px;background:#dddbda"></div>
<div style="position:absolute;left:23px;top:131px;width:953px;height:27px;background:#fafaf9;border-bottom:1px solid #dddbda"></div>
<div style="position:absolute;left:23px;top:187px;width:953px;height:1px;background:#dddbda"></div>
<svg style="position:absolute;left:32px;top:163px" width="18" height="18" viewBox="0 0 18 18"><circle cx="9" cy="9" r="9" fill="#17c1b0"/><path d="M4.2 9.8 L7.6 12.8 L14 6.6" stroke="#fff" stroke-width="2" fill="none"/></svg>
<svg style="position:absolute;left:933.5px;top:163px" width="19" height="19" viewBox="0 0 19 19"><circle cx="9.5" cy="9.5" r="9.5" fill="#5b9de0"/><circle cx="12.4" cy="8.4" r="4.2" fill="#fff"/><circle cx="8.2" cy="10.4" r="5.4" fill="#5b9de0"/><circle cx="8.2" cy="10.4" r="4.3" fill="#fff"/><path d="M4.6 12.2 L3.8 15.2 L7.2 14.2 Z" fill="#fff"/><circle cx="6.1" cy="10.5" r=".65" fill="#5b9de0"/><circle cx="8.2" cy="10.5" r=".65" fill="#5b9de0"/><circle cx="10.3" cy="10.5" r=".65" fill="#5b9de0"/></svg>
<div style="position:absolute;left:23px;top:248px;width:953px;height:2px;background:#dddbda"></div>
<div style="position:absolute;left:23px;top:250px;width:953px;height:26px;background:#fafaf9;border-bottom:1px solid #dddbda"></div>
<div style="position:absolute;left:23px;top:305px;width:953px;height:1px;background:#dddbda"></div>
<svg style="position:absolute;left:32px;top:281px" width="18" height="18" viewBox="0 0 18 18"><circle cx="9" cy="9" r="9" fill="#17c1b0"/><path d="M4.2 9.8 L7.6 12.8 L14 6.6" stroke="#fff" stroke-width="2" fill="none"/></svg>
<svg style="position:absolute;left:933.5px;top:281px" width="19" height="19" viewBox="0 0 19 19"><circle cx="9.5" cy="9.5" r="9.5" fill="#5b9de0"/><circle cx="12.4" cy="8.4" r="4.2" fill="#fff"/><circle cx="8.2" cy="10.4" r="5.4" fill="#5b9de0"/><circle cx="8.2" cy="10.4" r="4.3" fill="#fff"/><path d="M4.6 12.2 L3.8 15.2 L7.2 14.2 Z" fill="#fff"/><circle cx="6.1" cy="10.5" r=".65" fill="#5b9de0"/><circle cx="8.2" cy="10.5" r=".65" fill="#5b9de0"/><circle cx="10.3" cy="10.5" r=".65" fill="#5b9de0"/></svg>

<!-- details card -->
<div class="card" style="left:6px;top:335px;width:582px;height:340px"></div>
<div style="position:absolute;left:23px;top:382px;width:549px;height:1px;background:#dddbda"></div>
<div style="position:absolute;left:23px;top:380px;width:85px;height:2.5px;background:#0070d2"></div>
<div class="line" style="left:35px;top:446px;width:235px"></div>
<div class="line" style="left:35px;top:494px;width:235px"></div>
<div class="line" style="left:35px;top:542px;width:235px"></div>
<div class="line" style="left:35px;top:590px;width:235px"></div>
<div class="line" style="left:35px;top:638px;width:235px"></div>
<div class="line" style="left:326px;top:446px;width:234px"></div>
<div class="line" style="left:326px;top:494px;width:234px"></div>
<div class="line" style="left:326px;top:542px;width:234px"></div>
<div class="line" style="left:326px;top:590px;width:234px"></div>
<svg style="position:absolute;left:251px;top:425px" width="14" height="14" viewBox="0 0 14 14"><path d="M3.6 10.4 L9.8 4.2" stroke="#e6e6e6" stroke-width="3.2"/><path d="M1 13 L1.6 10 L4 12.4 Z" fill="#ececec"/><path d="M11 3 L12.2 1.8" stroke="#e6e6e6" stroke-width="3.2" stroke-linecap="round"/></svg>
<svg style="position:absolute;left:251px;top:473px" width="14" height="14" viewBox="0 0 14 14"><path d="M3.6 10.4 L9.8 4.2" stroke="#e6e6e6" stroke-width="3.2"/><path d="M1 13 L1.6 10 L4 12.4 Z" fill="#ececec"/><path d="M11 3 L12.2 1.8" stroke="#e6e6e6" stroke-width="3.2" stroke-linecap="round"/></svg>
<svg style="position:absolute;left:251px;top:521px" width="14" height="14" viewBox="0 0 14 14"><path d="M3.6 10.4 L9.8 4.2" stroke="#e6e6e6" stroke-width="3.2"/><path d="M1 13 L1.6 10 L4 12.4 Z" fill="#ececec"/><path d="M11 3 L12.2 1.8" stroke="#e6e6e6" stroke-width="3.2" stroke-linecap="round"/></svg>
<svg style="position:absolute;left:251px;top:569px" width="14" height="14" viewBox="0 0 14 14"><path d="M3.6 10.4 L9.8 4.2" stroke="#e6e6e6" stroke-width="3.2"/><path d="M1 13 L1.6 10 L4 12.4 Z" fill="#ececec"/><path d="M11 3 L12.2 1.8" stroke="#e6e6e6" stroke-width="3.2" stroke-linecap="round"/></svg>
<svg style="position:absolute;left:251px;top:617px" width="14" height="14" viewBox="0 0 14 14"><path d="M3.6 10.4 L9.8 4.2" stroke="#e6e6e6" stroke-width="3.2"/><path d="M1 13 L1.6 10 L4 12.4 Z" fill="#ececec"/><path d="M11 3 L12.2 1.8" stroke="#e6e6e6" stroke-width="3.2" stroke-linecap="round"/></svg>
<svg style="position:absolute;left:541px;top:425px" width="14" height="14" viewBox="0 0 14 14"><path d="M3.6 10.4 L9.8 4.2" stroke="#e6e6e6" stroke-width="3.2"/><path d="M1 13 L1.6 10 L4 12.4 Z" fill="#ececec"/><path d="M11 3 L12.2 1.8" stroke="#e6e6e6" stroke-width="3.2" stroke-linecap="round"/></svg>
<svg style="position:absolute;left:541px;top:473px" width="14" height="14" viewBox="0 0 14 14"><path d="M3.6 10.4 L9.8 4.2" stroke="#e6e6e6" stroke-width="3.2"/><path d="M1 13 L1.6 10 L4 12.4 Z" fill="#ececec"/><path d="M11 3 L12.2 1.8" stroke="#e6e6e6" stroke-width="3.2" stroke-linecap="round"/></svg>
<svg style="position:absolute;left:541px;top:521px" width="14" height="14" viewBox="0 0 14 14"><path d="M3.6 10.4 L9.8 4.2" stroke="#e6e6e6" stroke-width="3.2"/><path d="M1 13 L1.6 10 L4 12.4 Z" fill="#ececec"/><path d="M11 3 L12.2 1.8" stroke="#e6e6e6" stroke-width="3.2" stroke-linecap="round"/></svg>
<svg style="position:absolute;left:541px;top:569px" width="14" height="14" viewBox="0 0 14 14"><path d="M3.6 10.4 L9.8 4.2" stroke="#e6e6e6" stroke-width="3.2"/><path d="M1 13 L1.6 10 L4 12.4 Z" fill="#ececec"/><path d="M11 3 L12.2 1.8" stroke="#e6e6e6" stroke-width="3.2" stroke-linecap="round"/></svg>
<svg style="position:absolute;left:39px;top:423px" width="21" height="21" viewBox="0 0 21 21">
<circle cx="10.2" cy="10.3" r="10" fill="#eaecef"/>
<path d="M4 4.2 L5.4 2.6 L7.2 4 Q10.2 3 13.2 4 L15 2.6 L16.4 4.2 Q18.6 7.5 18 12 Q17.4 17 13.6 19.2 L6.8 19.2 Q3 17 2.4 12 Q1.8 7.5 4 4.2 Z" fill="#a6badd"/>
<path d="M4.1 3.6 L5.4 2.4 L6.8 5 L4.5 6.2 Z M16.3 3.6 L15 2.4 L13.6 5 L15.9 6.2 Z" fill="#2f6cc2"/>
<path d="M5.2 10 Q10.2 5.4 15.2 10" stroke="#3a6db8" stroke-width="1.4" fill="none"/>
<ellipse cx="10.2" cy="12.2" rx="4.9" ry="3.7" fill="#fff"/>
<circle cx="7.6" cy="12.9" r=".6" fill="#5d7ab0"/><circle cx="12.6" cy="12.9" r=".6" fill="#5d7ab0"/>
<ellipse cx="9.8" cy="18.8" rx="1.6" ry="1" fill="#2f6cc2"/>
</svg>
<div style="position:absolute;left:63px;top:441px;width:104px;height:0;border-top:1px dotted #0070d2"></div>

<!-- timer card -->
<div class="card" style="left:601px;top:335px;width:392px;height:205px;box-shadow:0 1px 0 rgba(40,50,70,.45),0 2px 2px rgba(0,0,0,.15)"></div>
<div style="position:absolute;left:622px;top:387px;width:111px;height:63px;border:1px solid #dddbda;border-radius:4px"></div>
<div style="position:absolute;left:741px;top:387px;width:111px;height:63px;border:1px solid #dddbda;border-radius:4px"></div>
<div style="position:absolute;left:645px;top:477px;width:300px;height:60px;border:4px solid #f0584c"></div>
<div style="position:absolute;left:659px;top:492px;width:71px;height:31px;background:#fe9c2d;border-radius:4px"></div>
<div style="position:absolute;left:734px;top:492px;width:102px;height:31px;background:#0b7d45;border-radius:4px"></div>
<div style="position:absolute;left:840px;top:492px;width:95px;height:31px;background:#0a6fd0;border-radius:4px"></div>

<!-- publisher card -->
<div class="card" style="left:601px;top:553px;width:392px;height:130px"></div>
<div style="position:absolute;left:662px;top:554px;width:330px;height:54px;background:#f3f2f2;border-left:1px solid #dddbda;border-bottom:1px solid #dddbda;border-bottom-left-radius:2px"></div>
<div style="position:absolute;left:618px;top:625px;width:350px;height:32px;border:1px solid #dddbda;border-radius:4px;background:#fff"></div>

<!-- scrollbar -->
<div style="position:absolute;left:992px;top:9px;width:16px;height:660px;background:#fafafa;border-left:1px solid #dcdcdc;border-right:1px solid #ececec"></div>
<div style="position:absolute;left:997px;top:12px;width:8px;height:224px;background:#c1c1c1;border-radius:4px"></div>
<div class="t" style="left:67.4px;top:26.53px;font-size:12.5px;letter-spacing:-0.233px;color:#3e3e3c">Task</div>
<div class="t" style="left:67.8px;top:40.17px;font-size:18px;font-weight:bold;color:#080707">Technical Adjustments</div>
<div class="t" style="left:533.0px;top:37.2px;font-size:13px;letter-spacing:0.408px;color:#1b5aa6">Mark Complete</div>
<div class="t" style="left:664.7px;top:37.0px;font-size:13px;letter-spacing:0.233px;color:#1b5aa6">Edit</div>
<div class="t" style="left:721.2px;top:37.0px;font-size:13px;letter-spacing:0.4px;color:#1b5aa6">Edit Comments</div>
<div class="t" style="left:849.6px;top:37.0px;font-size:13px;letter-spacing:0.07px;color:#1b5aa6">Change Date</div>
<div class="t" style="left:30.6px;top:111.85px;font-size:12px;letter-spacing:-0.112px;color:#3e3e3c">Predecessor Tasks</div>
<div class="t" style="left:66.4px;top:137.9px;font-size:13px;font-weight:bold;letter-spacing:-0.164px;color:#4a4948">Task Subject</div>
<div class="t" style="left:314.35px;top:137.9px;font-size:13px;font-weight:bold;letter-spacing:-0.35px;color:#4a4948">Assigned To</div>
<div class="t" style="left:422.35px;top:137.9px;font-size:13px;font-weight:bold;letter-spacing:0.078px;color:#4a4948">Start Date</div>
<div class="t" style="left:515.2px;top:137.9px;font-size:13px;font-weight:bold;letter-spacing:-0.08px;color:#4a4948">Finish Date</div>
<div class="t" style="left:624.15px;top:137.9px;font-size:13px;font-weight:bold;letter-spacing:-0.22px;color:#4a4948">Status</div>
<div class="t" style="left:697.2px;top:137.9px;font-size:13px;font-weight:bold;color:#4a4948">Days Overdue</div>
<div class="t" style="left:812.8px;top:137.9px;font-size:13px;font-weight:bold;letter-spacing:0.067px;color:#4a4948">Dependency</div>
<div class="t" style="left:919.7px;top:137.9px;font-size:13px;font-weight:bold;color:#4a4948">Chatter</div>
<div class="t" style="left:30.6px;top:231.15px;font-size:12px;letter-spacing:-0.157px;color:#3e3e3c">Successor Tasks</div>
<div class="t" style="left:66.4px;top:256.4px;font-size:13px;font-weight:bold;letter-spacing:-0.164px;color:#4a4948">Task Subject</div>
<div class="t" style="left:314.35px;top:256.4px;font-size:13px;font-weight:bold;letter-spacing:-0.35px;color:#4a4948">Assigned To</div>
<div class="t" style="left:422.35px;top:256.4px;font-size:13px;font-weight:bold;letter-spacing:0.078px;color:#4a4948">Start Date</div>
<div class="t" style="left:515.2px;top:256.4px;font-size:13px;font-weight:bold;letter-spacing:-0.08px;color:#4a4948">Finish Date</div>
<div class="t" style="left:624.15px;top:256.4px;font-size:13px;font-weight:bold;letter-spacing:-0.22px;color:#4a4948">Status</div>
<div class="t" style="left:697.2px;top:256.4px;font-size:13px;font-weight:bold;color:#4a4948">Days Overdue</div>
<div class="t" style="left:812.8px;top:256.4px;font-size:13px;font-weight:bold;letter-spacing:0.067px;color:#4a4948">Dependency</div>
<div class="t" style="left:919.7px;top:256.4px;font-size:13px;font-weight:bold;color:#4a4948">Chatter</div>
<div class="t" style="left:65.0px;top:166.2px;font-size:13px;letter-spacing:0.359px;color:#0070d2">Submit feedback to Technical Team</div>
<div class="t" style="left:307.0px;top:166.2px;font-size:13px;letter-spacing:0.182px;color:#0070d2">Anna Guanzon</div>
<div class="t" style="left:414.4px;top:166.2px;font-size:13px;letter-spacing:1.422px;color:#080707">11/17/2020</div>
<div class="t" style="left:511.8px;top:166.2px;font-size:13px;letter-spacing:1.444px;color:#080707">11/20/2020</div>
<div class="t" style="left:608.4px;top:166.2px;font-size:13px;letter-spacing:0.4px;color:#080707">Not Started</div>
<div class="t" style="left:737.9px;top:166.2px;font-size:13px;color:#080707">0</div>
<div class="t" style="left:819.85px;top:166.2px;font-size:13px;color:#080707">Finish First</div>
<div class="t" style="left:66.3px;top:284.2px;font-size:13px;letter-spacing:0.144px;color:#0070d2">Client Review and Sign-off</div>
<div class="t" style="left:414.4px;top:284.2px;font-size:13px;letter-spacing:1.422px;color:#080707">11/25/2020</div>
<div class="t" style="left:511.8px;top:284.2px;font-size:13px;letter-spacing:1.444px;color:#080707">11/25/2020</div>
<div class="t" style="left:608.4px;top:284.2px;font-size:13px;letter-spacing:0.4px;color:#080707">Not Started</div>
<div class="t" style="left:737.9px;top:284.2px;font-size:13px;color:#080707">0</div>
<div class="t" style="left:805.75px;top:284.2px;font-size:13px;letter-spacing:0.273px;color:#080707">Waiting to Start</div>
<div class="t" style="left:38.9px;top:351.86px;font-size:16px;font-weight:bold;letter-spacing:0.083px;color:#080707">Details</div>
<div class="t" style="left:147.6px;top:351.76px;font-size:16px;letter-spacing:0.1px;color:#3e3e3c">Related</div>
<div class="t" style="left:260.9px;top:351.76px;font-size:16px;letter-spacing:0.15px;color:#3e3e3c">Time Tracking</div>
<div class="t" style="left:39.5px;top:405.75px;font-size:12px;letter-spacing:0.02px;color:#3e3e3c">Assigned To</div>
<div class="t" style="left:38.6px;top:454.05px;font-size:12px;letter-spacing:0.217px;color:#3e3e3c">Subject</div>
<div class="t" style="left:38.6px;top:501.85px;font-size:12px;letter-spacing:0.133px;color:#3e3e3c">Start Date</div>
<div class="t" style="left:38.6px;top:549.85px;font-size:12px;letter-spacing:0.271px;color:#3e3e3c">Due Date</div>
<div class="t" style="left:38.6px;top:597.55px;font-size:12px;letter-spacing:0.108px;color:#3e3e3c">Resource Name</div>
<div class="t" style="left:38.6px;top:646.05px;font-size:12px;letter-spacing:-0.1px;color:#3e3e3c">Resource Type</div>
<div class="t" style="left:328.8px;top:405.85px;font-size:12px;letter-spacing:0.22px;color:#3e3e3c">Status</div>
<div class="t" style="left:329.8px;top:453.85px;font-size:12px;letter-spacing:0.722px;color:#3e3e3c">% Complete</div>
<div class="t" style="left:328.9px;top:501.85px;font-size:12px;letter-spacing:0.386px;color:#3e3e3c">Priority</div>
<div class="t" style="left:328.9px;top:549.45px;font-size:12px;letter-spacing:0.633px;color:#3e3e3c">Name</div>
<div class="t" style="left:63.5px;top:425.96px;font-size:14px;letter-spacing:0.338px;color:#0070d2">Andrey Antonov</div>
<div class="t" style="left:39.6px;top:474.36px;font-size:14px;letter-spacing:0.34px;color:#080707">Technical Adjustments</div>
<div class="t" style="left:38.6px;top:522.16px;font-size:14px;letter-spacing:1.611px;color:#080707">11/20/2020</div>
<div class="t" style="left:38.6px;top:570.16px;font-size:14px;letter-spacing:1.611px;color:#080707">11/25/2020</div>
<div class="t" style="left:39.6px;top:618.16px;font-size:14px;letter-spacing:0.392px;color:#080707">Andrey Antonov</div>
<div class="t" style="left:328.8px;top:426.16px;font-size:14px;letter-spacing:0.46px;color:#080707">Not Started</div>
<div class="t" style="left:328.9px;top:522.16px;font-size:14px;letter-spacing:0.86px;color:#080707">Normal</div>
<div class="t" style="left:38.6px;top:666.16px;font-size:14px;letter-spacing:0.733px;color:#080707">User</div>
<div class="t" style="left:708.9px;top:354.05px;font-size:12px;font-weight:bold;letter-spacing:0.67px;color:#4a4948">TECHNICAL ADJUSTMENTS</div>
<div class="t" style="left:634.3px;top:392.81px;font-size:52px;color:#080707">2</div>
<div class="t" style="left:753.2px;top:392.81px;font-size:52px;letter-spacing:2.5px;color:#080707">28</div>
<div class="t" style="left:885.8px;top:392.51px;font-size:52px;letter-spacing:2.5px;color:#080707">00</div>
<div class="t" style="left:653.75px;top:456.03px;font-size:12.5px;letter-spacing:0.275px;color:#3e3e3c">HOURS</div>
<div class="t" style="left:765.8px;top:456.03px;font-size:12.5px;letter-spacing:0.7px;color:#3e3e3c">MINUTES</div>
<div class="t" style="left:883.3px;top:454.73px;font-size:12.5px;letter-spacing:0.367px;color:#3e3e3c">SECONDS</div>
<div class="t" style="left:675.15px;top:501.85px;font-size:12px;letter-spacing:-0.775px;color:#fff">RESET</div>
<div class="t" style="left:751.15px;top:501.0px;font-size:13px;letter-spacing:0.014px;color:#fff">CONTINUE</div>
<div class="t" style="left:856.45px;top:501.0px;font-size:13px;letter-spacing:-0.071px;color:#fff">LOG TIME</div>
<div class="t" style="left:617.5px;top:572.96px;font-size:14px;letter-spacing:-0.133px;color:#16599e">Post</div>
<div class="t" style="left:679.4px;top:572.96px;font-size:14px;letter-spacing:0.333px;color:#3e3e3c">Poll</div>
<div class="t" style="left:737.05px;top:634.1px;font-size:13px;letter-spacing:0.206px;color:#514f4d">Share an update...</div>
<div style="position:absolute;left:0;top:0;width:1018px;height:2px;background:#f3f3f3"></div>
<div style="position:absolute;left:0;top:669px;width:1018px;height:2px;background:#f0f0f0"></div>
<div style="position:absolute;left:0;top:0;width:2px;height:671px;background:#f3f3f3"></div>
<div style="position:absolute;left:1016px;top:0;width:2px;height:671px;background:#f3f3f3"></div>
</body></html>
